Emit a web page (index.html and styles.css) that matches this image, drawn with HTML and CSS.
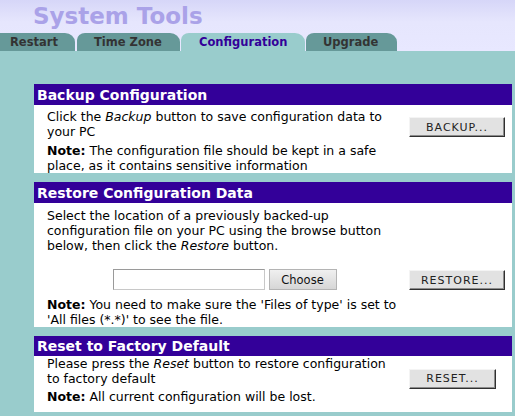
FILE: index.html
```html
<!DOCTYPE html>
<html lang="en">
<head>
<meta charset="utf-8">
<title>System Tools</title>
<link rel="stylesheet" href="styles.css">
</head>
<body>
<div class="top">
  <h1 class="title">System Tools</h1>
  <div class="tabs">
    <span class="tab tab-restart">Restart</span>
    <span class="tab tab-zone">Time Zone</span>
    <span class="tab tab-config tab-active">Configuration</span>
    <span class="tab tab-upgrade">Upgrade</span>
  </div>
</div>
<div class="content">
  <section class="panel">
    <h2 class="panel-head">Backup Configuration</h2>
    <div class="panel-body body-backup">
      <p class="txt">Click the <i>Backup</i> button to save configuration data to your PC</p>
      <div class="act act-backup"><button class="btn btn-wide">BACKUP...</button></div>
      <p class="txt"><b>Note:</b> The configuration file should be kept in a safe place, as it contains sensitive information</p>
    </div>
  </section>
  <section class="panel">
    <h2 class="panel-head">Restore Configuration Data</h2>
    <div class="panel-body body-restore">
      <p class="txt">Select the location of a previously backed-up configuration file on your PC using the browse button below, then click the <i>Restore</i> button.</p>
      <div class="file-row">
        <input class="file-text" type="text">
        <button class="choose">Choose</button>
      </div>
      <div class="act act-restore"><button class="btn btn-wide">RESTORE...</button></div>
      <p class="txt note-restore"><b>Note:</b> You need to make sure the 'Files of type' is set to 'All files (*.*)' to see the file.</p>
    </div>
  </section>
  <section class="panel">
    <h2 class="panel-head panel-head-short">Reset to Factory Default</h2>
    <div class="panel-body body-reset">
      <p class="txt">Please press the <i>Reset</i> button to restore configuration to factory default</p>
      <div class="act act-reset"><button class="btn btn-narrow">RESET...</button></div>
      <p class="txt"><b>Note:</b> All current configuration will be lost.</p>
    </div>
  </section>
</div>
</body>
</html>
```
FILE: styles.css
```css
html, body {
  margin: 0;
  padding: 0;
}
body {
  background: #99cccc;
  font-family: "DejaVu Sans", Verdana, sans-serif;
  font-size: 12.5px;
  color: #000;
  overflow: hidden;
}
.top {
  height: 51px;
  background: linear-gradient(to bottom, #d6d6f8 0px, #e6e6fd 22px, #e8e8ff 51px);
  display: flex;
  flex-direction: column;
  justify-content: space-between;
}
.title {
  margin: 0;
  padding: 3px 0 0 33px;
  font-size: 23px;
  font-weight: bold;
  line-height: 26px;
  color: #aaa2e8;
}
.tabs {
  display: flex;
  align-items: flex-end;
  gap: 1px;
  height: 18px;
}
.tab {
  display: block;
  box-sizing: border-box;
  height: 18px;
  line-height: 19px;
  padding-left: 17px;
  background: #669999;
  color: #333333;
  font-weight: bold;
  font-size: 11.5px;
  border-radius: 8px 10px 0 0 / 7px 9px 0 0;
  white-space: nowrap;
}
.tab-restart {
  margin-left: -8px;
  margin-right: 1px;
  padding-left: 18px;
  width: 83px;
}
.tab-zone {
  width: 103px;
}
.tab-config {
  width: 124px;
  padding-left: 18px;
}
.tab-upgrade {
  width: 91px;
}
.tab-active {
  background: #99cccc;
  color: #330099;
}
.content {
  padding: 33px 3px 0 34px;
  display: flex;
  flex-direction: column;
  gap: 9px;
}
.panel {
  background: #ffffff;
}
.panel-head {
  margin: 0;
  box-sizing: border-box;
  background: #330099;
  color: #ffffff;
  font-size: 14px;
  font-weight: bold;
  height: 21px;
  padding: 2px 0 0 3px;
  line-height: 19px;
  white-space: nowrap;
}
.panel-head-short {
  height: 20px;
  padding-top: 1px;
}
.panel-body {
  display: grid;
  grid-template-columns: 355px 1fr;
  padding-left: 13px;
}
.txt {
  margin: 0;
  line-height: 15px;
  grid-column: 1;
}
.body-backup {
  padding: 4px 0 0 13px;
  row-gap: 4px;
}
.act {
  grid-column: 2;
  padding-left: 7px;
}
.act-backup {
  grid-row: 1;
  align-self: center;
  margin-top: 6px;
}
.body-restore {
  padding: 5px 0 0 13px;
}
.file-row {
  grid-column: 1;
  grid-row: 2;
  justify-self: center;
  display: flex;
  gap: 4px;
  margin-top: 16px;
}
.file-text {
  box-sizing: border-box;
  width: 152px;
  height: 21px;
  margin: 0;
  padding: 0;
  background: #fff;
  border: 1px solid #c8c8c8;
  border-top-color: #9a9a9a;
  border-left-color: #9a9a9a;
}
.choose {
  box-sizing: border-box;
  width: 68px;
  height: 21px;
  margin: 0;
  padding: 0;
  font-family: "DejaVu Sans", Verdana, sans-serif;
  font-size: 11.5px;
  color: #111;
  background: linear-gradient(to bottom, #f0f0f0, #d6d6d6);
  border: 1px solid #b4b4b4;
}
.act-restore {
  grid-row: 2;
  align-self: end;
}
.note-restore {
  grid-row: 3;
  margin-top: 7px;
}
.body-reset {
  padding: 0 0 8px 13px;
  row-gap: 3px;
}
.act-reset {
  grid-row: 1 / 3;
  align-self: center;
  margin-bottom: 3px;
}
.btn {
  box-sizing: border-box;
  height: 20px;
  margin: 0;
  padding: 0;
  font-family: "DejaVu Sans", Verdana, sans-serif;
  font-size: 11px;
  letter-spacing: 1px;
  color: #222;
  background: #e2e2e2;
  border: 1px solid;
  border-color: #f4f4f4 #303030 #303030 #f4f4f4;
  box-shadow: inset -1px -1px 0 #8c8c8c;
}
.btn-wide {
  width: 96px;
}
.btn-narrow {
  width: 87px;
}
```
